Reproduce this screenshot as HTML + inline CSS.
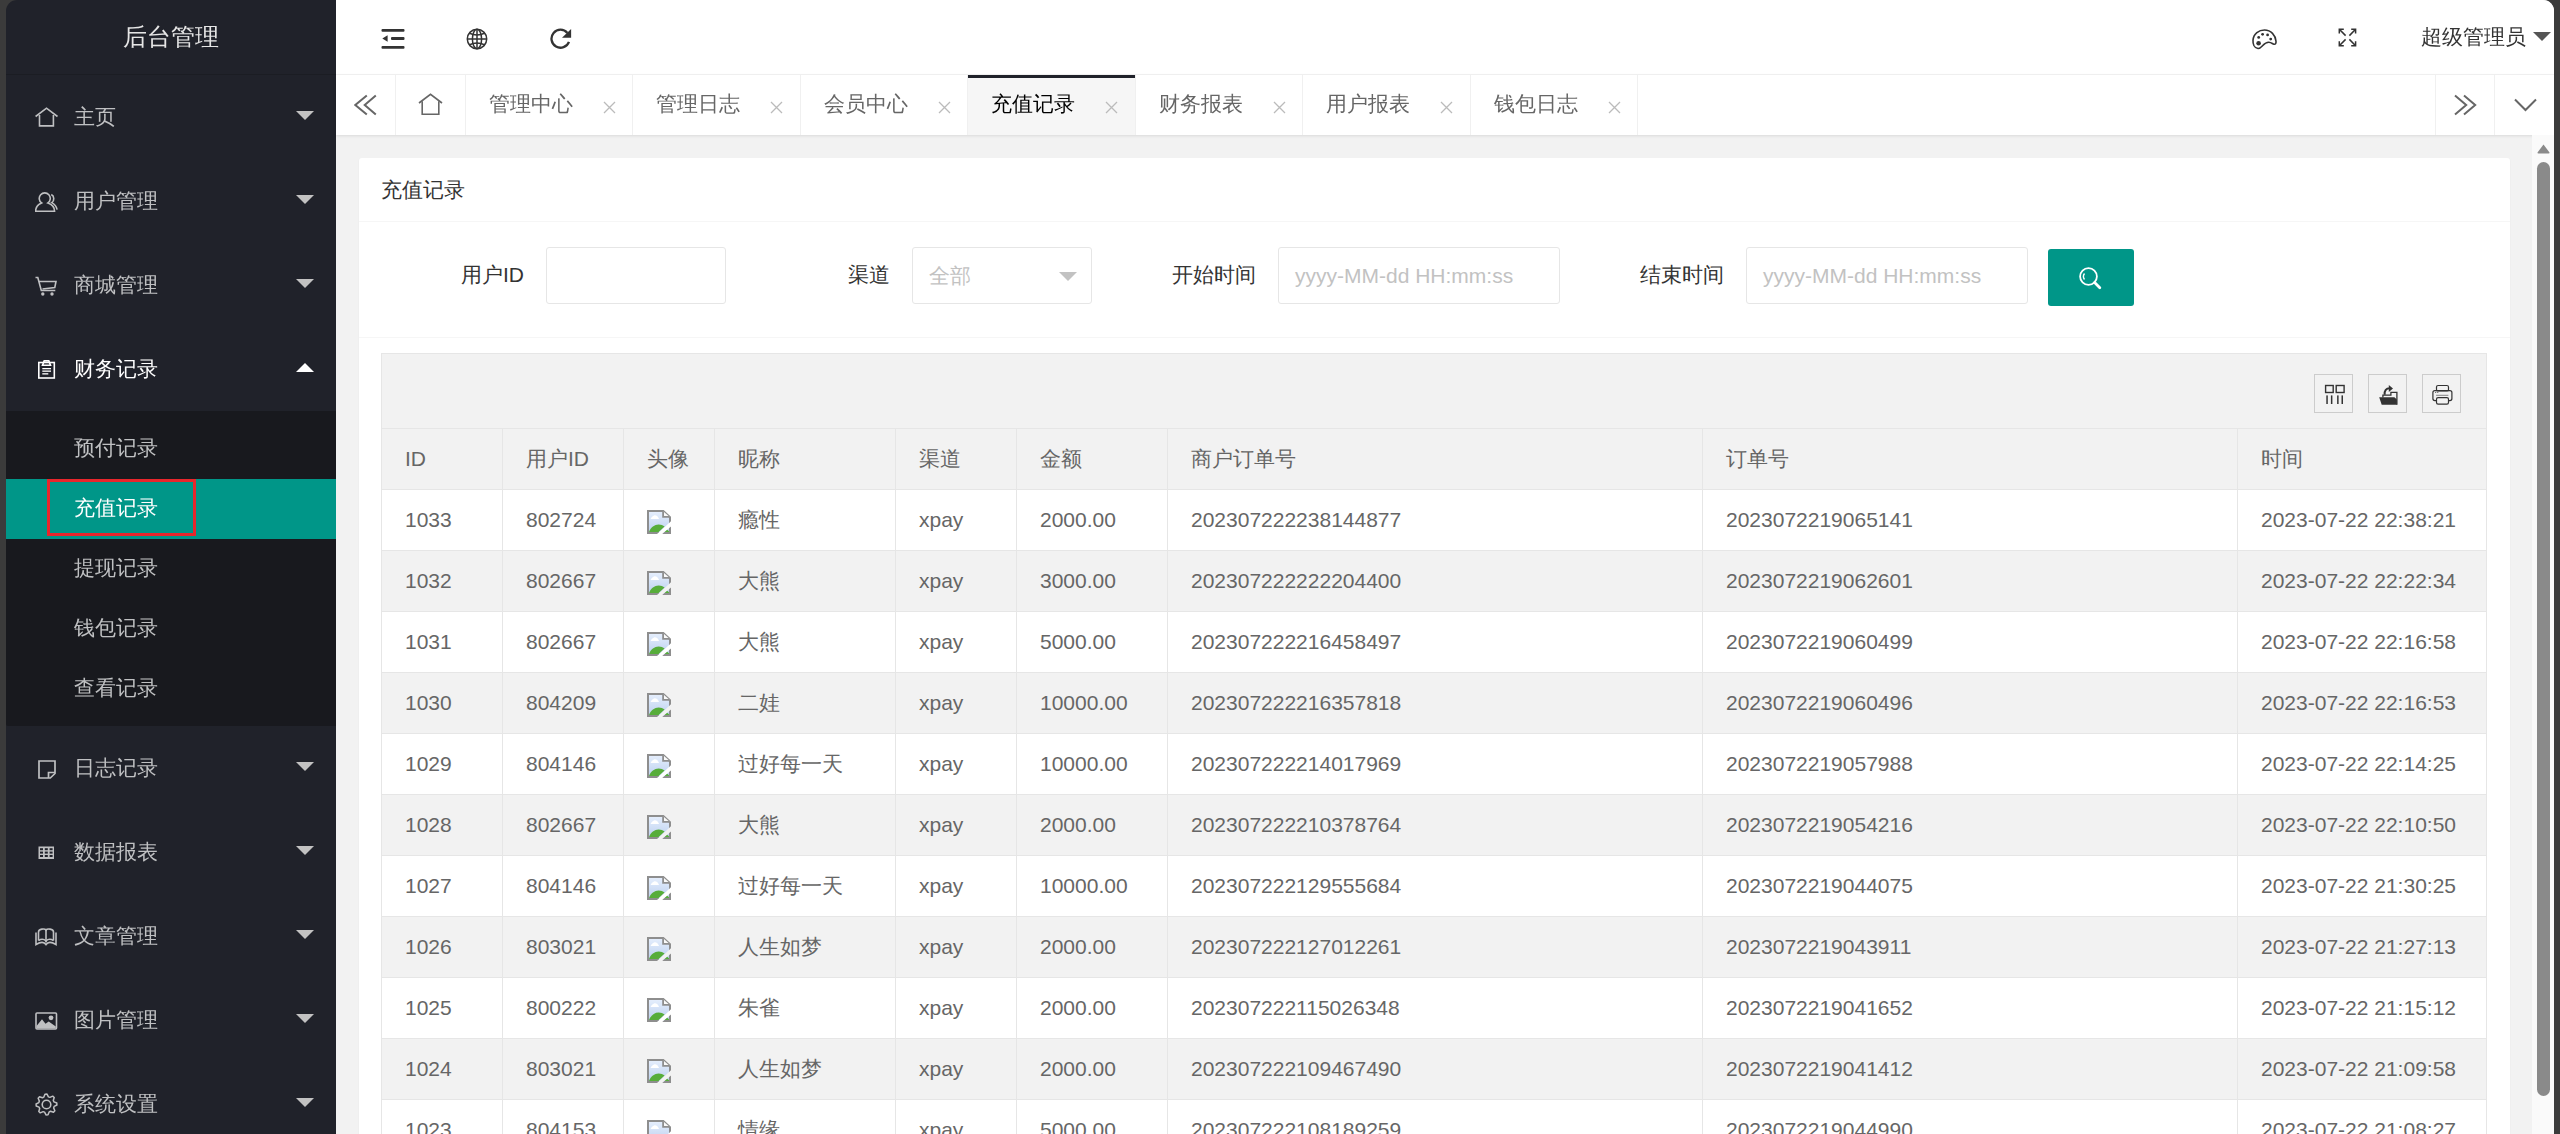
<!DOCTYPE html>
<html><head><meta charset="utf-8"><style>
*{box-sizing:border-box;margin:0;padding:0}
html,body{width:2560px;height:1134px;overflow:hidden;background:#3b3b3b;font-family:"Liberation Sans",sans-serif}
#app{position:absolute;left:6px;top:0;width:2548px;height:1134px;overflow:hidden;border-radius:11px 11px 0 0}
#side{position:absolute;left:0;top:0;width:330px;height:1134px;background:#20222a;will-change:transform}
#logo{position:absolute;left:0;top:0;width:330px;height:75px;line-height:74px;text-align:center;color:#e6e6e6;font-size:24px;border-bottom:1px solid #1b1d23}
.ni{position:absolute;left:0;width:330px;height:84px;color:#bfc0c2;font-size:21px;line-height:84px}
.ni .t{position:absolute;left:68px;top:0}
.ni svg{position:absolute}
.ni .ar{position:absolute;left:290px;width:0;height:0;border-left:9px solid transparent;border-right:9px solid transparent;border-top:9px solid #c2c2c2;top:36px}
.ni.open{color:#fff}
.ni.open .ar{border-top:0;border-bottom:9px solid #fff;top:36px}
#sub{position:absolute;left:0;top:411px;width:330px;height:315px;background:#18191e;border-radius:0 0 0 2px}
.si{position:absolute;left:0;width:330px;height:60px;line-height:60px;color:#bfc0c2;font-size:21px}
.si .t{position:absolute;left:68px;top:-1px}
.si.act{background:#009688;color:#fff}
#redbox{position:absolute;left:41px;top:479px;width:149px;height:57px;border:3px solid #e8262c}
#main{position:absolute;left:330px;top:0;width:2218px;height:1134px;background:#f2f2f2}
#hdr{position:absolute;left:0;top:0;width:2218px;height:75px;background:#fff;border-bottom:1px solid #f3f3f3;will-change:transform}
#hdr svg{position:absolute}
#uname{position:absolute;left:2085px;top:0;line-height:74px;font-size:21px;color:#333}
#uarr{position:absolute;left:2197px;top:32px;width:0;height:0;border-left:9px solid transparent;border-right:9px solid transparent;border-top:9px solid #555}
#tabs{position:absolute;left:0;top:75px;width:2218px;height:60px;background:#fff;box-shadow:0 1px 3px rgba(0,0,0,.10);will-change:transform}
#tabs svg{position:absolute}
.tb{position:absolute;top:0;height:60px;border-right:1px solid #f0f0f0;color:#666;font-size:21px;line-height:58px}
.tb .t{position:absolute;left:23px;top:0}
.tb svg{position:absolute;left:137px;top:26px}
.tb.act{background:#f6f6f6;color:#000}
.tb.act::before{content:"";position:absolute;left:0;top:0;right:0;height:3px;background:#20222a}
#card{position:absolute;left:23px;top:158px;width:2151px;height:1000px;background:#fff;border-radius:3px;box-shadow:0 1px 2px rgba(0,0,0,.05)}
.ch{position:absolute;left:0;top:0;width:2151px;height:64px;border-bottom:1px solid #f6f6f6;color:#333;font-size:21px;line-height:63px;padding-left:22px}
.fa{position:absolute;left:0;top:64px;width:2151px;height:116px;border-bottom:1px solid #f6f6f6}
.lbl{position:absolute;color:#333;font-size:21px;line-height:56px;top:25px;white-space:nowrap}
.inp{position:absolute;top:25px;height:57px;border:1px solid #e6e6e6;border-radius:3px;background:#fff;color:#c2c2c2;font-size:21px;line-height:55px;padding-left:16px;white-space:nowrap}
#sbtn{position:absolute;left:1689px;top:27px;width:86px;height:57px;background:#009688;border-radius:3px}
#scr{position:absolute;left:2196px;top:135px;width:22px;height:999px;background:#fafafa}
#thumb{position:absolute;left:5px;top:27px;width:13px;height:934px;background:#8a8a8a;border-radius:7px}
#tool{position:absolute;left:22px;top:195px;width:2106px;height:75px;background:#f2f2f2;border:1px solid #e6e6e6;border-bottom:0}
.tbtn{position:absolute;top:20px;width:39px;height:39px;border:1px solid #ccc}
.tbtn svg{position:absolute;left:0;top:0}
table{border-collapse:collapse;position:absolute;left:22px;top:270px;table-layout:fixed;width:2105px}
td{border:1px solid #e6e6e6;height:61px;font-size:21px;color:#666;padding:0 0 0 23px;white-space:nowrap;overflow:hidden;background:#fff}
tr.h td{height:61px;background:#f2f2f2}
tr.e td{background:#f2f2f2}
td svg{vertical-align:middle;position:relative;top:1px}
</style></head><body>
<div id="app">
<div id="side">
<div id="logo">后台管理</div>
<div class="ni" style="top:75px"><span class="t">主页</span><span class="ar"></span></div>
<svg style="position:absolute;left:29px;top:107px" width="23" height="20" viewBox="0 0 23 20"><g fill="none" stroke="#bfc0c2" stroke-width="1.6" stroke-linejoin="miter"><path d="M0.6 9.5 L11.5 1.2 L22.5 9.5"/><path d="M4.5 8 V18.9 H18.4 V8"/></g></svg>
<div class="ni" style="top:159px"><span class="t">用户管理</span><span class="ar"></span></div>
<svg style="position:absolute;left:29px;top:191px" width="23" height="21" viewBox="0 0 23 21"><g fill="none" stroke="#bfc0c2" stroke-width="1.6"><path d="M6.6 11.9 A5.5 5.5 0 1 1 12.9 11.9 C17.5 13.5 19.6 17 19.6 20.4 H0.6 C0.6 17 2.5 13.5 6.6 11.9 Z"/><path d="M16.3 3.5 C19.5 5 19.5 10 16.8 11.6 C19.8 13.2 21.5 15.5 22.1 18.6"/></g></svg>
<div class="ni" style="top:243px"><span class="t">商城管理</span><span class="ar"></span></div>
<svg style="position:absolute;left:29px;top:276px" width="22" height="20" viewBox="0 0 22 20"><g fill="none" stroke="#bfc0c2" stroke-width="1.6"><path d="M0.5 1.5 H2.8 L6.3 14.5 H20.3"/><path d="M4 5.5 H21 L19.8 11.5 L7.5 13"/></g><circle cx="7.8" cy="18" r="1.7" fill="#bfc0c2"/><circle cx="17" cy="18" r="1.7" fill="#bfc0c2"/></svg>
<div class="ni open" style="top:327px"><span class="t">财务记录</span><span class="ar"></span></div>
<svg style="position:absolute;left:32px;top:360px" width="18" height="19" viewBox="0 0 18 19"><g fill="none" stroke="#ffffff" stroke-width="1.6"><rect x="0.8" y="2.5" width="15.5" height="15.5"/><path d="M4.5 5.3 H12.5 L10.8 0.9 H6.2 Z"/></g><g fill="#ffffff"><rect x="4.3" y="8" width="8.7" height="1.3"/><rect x="4.3" y="10.5" width="8.7" height="1.3"/><rect x="4.3" y="13.2" width="6" height="1.3"/></g></svg>
<div class="ni" style="top:726px"><span class="t">日志记录</span><span class="ar"></span></div>
<svg style="position:absolute;left:32px;top:760px" width="18" height="19" viewBox="0 0 18 19"><g fill="none" stroke="#bfc0c2" stroke-width="1.7"><path d="M1 1 H17 V13.5 L12.3 18 H1 Z"/><path d="M10.5 18 V12.5 H17"/></g></svg>
<div class="ni" style="top:810px"><span class="t">数据报表</span><span class="ar"></span></div>
<svg style="position:absolute;left:32px;top:846px" width="17" height="14" viewBox="0 0 17 14"><rect x="0.5" y="0.5" width="15.5" height="12.5" fill="#bfc0c2"/><g fill="#20222a"><rect x="2" y="2.2" width="3" height="2"/><rect x="6.8" y="2.2" width="3" height="2"/><rect x="11.6" y="2.2" width="3" height="2"/><rect x="2" y="5.6" width="3" height="2"/><rect x="6.8" y="5.6" width="3" height="2"/><rect x="11.6" y="5.6" width="3" height="2"/><rect x="2" y="9" width="3" height="2"/><rect x="6.8" y="9" width="3" height="2"/><rect x="11.6" y="9" width="3" height="2"/></g></svg>
<div class="ni" style="top:894px"><span class="t">文章管理</span><span class="ar"></span></div>
<svg style="position:absolute;left:29px;top:927px" width="23" height="19" viewBox="0 0 23 19"><g fill="none" stroke="#bfc0c2" stroke-width="1.6"><path d="M1 5.5 V17.5 C6 14.5 9 14.5 11 17.5 C13 14.5 16 14.5 21 17.5 V5.5"/><path d="M3.5 13.5 V5 C3.5 1.5 10 1.5 11 3 C12 1.5 18.5 1.5 18.5 5 V13.5"/><path d="M11 3 V15.5"/><path d="M3.5 13.5 C6 12 9 12 11 14 C13 12 16 12 18.5 13.5"/></g></svg>
<div class="ni" style="top:978px"><span class="t">图片管理</span><span class="ar"></span></div>
<svg style="position:absolute;left:29px;top:1012px" width="23" height="18" viewBox="0 0 23 18"><rect x="1" y="1" width="20.5" height="16" rx="1" fill="none" stroke="#bfc0c2" stroke-width="1.6"/><path d="M1.5 14 L7 7.3 L10.5 11.8 L13.7 9.5 L20.8 14.5 V16.5 H1.5 Z" fill="#bfc0c2"/><circle cx="16" cy="5.8" r="2.4" fill="#bfc0c2"/></svg>
<div class="ni" style="top:1062px"><span class="t">系统设置</span><span class="ar"></span></div>
<svg style="position:absolute;left:29px;top:1093px" width="23" height="23" viewBox="0 0 23 23"><polygon points="9.97,1.21 12.01,1.11 13.42,3.84 14.88,4.36 17.70,3.15 19.21,4.52 18.28,7.44 18.94,8.84 21.79,9.97 21.89,12.01 19.16,13.42 18.64,14.88 19.85,17.70 18.48,19.21 15.56,18.28 14.16,18.94 13.03,21.79 10.99,21.89 9.58,19.16 8.12,18.64 5.30,19.85 3.79,18.48 4.72,15.56 4.06,14.16 1.21,13.03 1.11,10.99 3.84,9.58 4.36,8.12 3.15,5.30 4.52,3.79 7.44,4.72 8.84,4.06" fill="none" stroke="#bfc0c2" stroke-width="1.5" stroke-linejoin="round"/><circle cx="11.5" cy="11.5" r="4.3" fill="none" stroke="#bfc0c2" stroke-width="1.6"/></svg>
<div id="sub">
<div class="si" style="top:7.5px"><span class="t">预付记录</span></div>
<div class="si act" style="top:67.5px"><span class="t">充值记录</span></div>
<div class="si" style="top:127.5px"><span class="t">提现记录</span></div>
<div class="si" style="top:187.5px"><span class="t">钱包记录</span></div>
<div class="si" style="top:247.5px"><span class="t">查看记录</span></div>
</div>
<div id="redbox"></div>
</div>
<div id="main">
<svg width="0" height="0" style="position:absolute"><defs><linearGradient id="bgr" x1="0" y1="0" x2="0" y2="1"><stop offset="0" stop-color="#e6effd"/><stop offset="1" stop-color="#bcd0ef"/></linearGradient><clipPath id="bcut"><path d="M0 0 H24 V11.2 L10 24 H0 Z M24 16.5 V24 H15.2 Z"/></clipPath></defs></svg>
<div id="hdr"><svg style="left:45px;top:28px" width="24" height="22" viewBox="0 0 24 22"><g fill="#333"><rect x="0.5" y="1" width="23" height="2.8" rx="1"/><rect x="10" y="9.1" width="13.5" height="2.8" rx="1"/><rect x="0.5" y="18" width="23" height="2.8" rx="1"/><path d="M1.3 10.5 L6.6 7.3 V13.7 Z"/></g></svg><svg style="left:130px;top:28px" width="22" height="22" viewBox="0 0 22 22"><g fill="none" stroke="#333" stroke-width="1.5"><circle cx="11" cy="11" r="9.7"/><ellipse cx="11" cy="11" rx="4.6" ry="9.7"/><path d="M11 1.3 V20.7 M1.3 11 H20.7"/><path d="M3 5 Q11 9 19 5 M3 17 Q11 13 19 17"/></g></svg><svg style="left:214px;top:28px" width="22" height="22" viewBox="0 0 22 22"><path d="M18.96 13.78 A9 9 0 1 1 17.39 4.91" fill="none" stroke="#333" stroke-width="2.3"/><path d="M21.1 0.9 V9.7 H12 Z" fill="#333"/></svg><svg style="left:1915px;top:28px" width="27" height="23" viewBox="0 0 27 23"><path transform="translate(1 0.7)" d="M6 19.8 C2 19.3 0.8 15 1 11.5 C1.5 5 7 1.3 12.5 1.3 C19 1.3 23.5 6.5 24 12.5 C24.2 14.5 23.5 15.8 22 15.6 C20.5 15.3 19.5 13.8 16.8 13.6 C14 13.5 12 15.5 10.5 17 C9 18.6 7.8 20 6 19.8 Z" fill="none" stroke="#333" stroke-width="1.6"/><g fill="#333"><circle cx="7.6" cy="15.3" r="2.3"/><circle cx="7.7" cy="9.4" r="1.4"/><circle cx="11.6" cy="6.3" r="1.4"/><circle cx="16.6" cy="6.9" r="1.4"/><circle cx="19.7" cy="11.1" r="1.4"/></g></svg><svg style="left:2002px;top:28px" width="20" height="20" viewBox="0 0 20 20"><g fill="none" stroke="#333" stroke-width="1.5"><path d="M1.3 5.5 V1.3 H5.8 M1.3 1.3 L7.6 7.6"/><path d="M13.2 1.3 H17.6 V5.5 M17.6 1.3 L11.4 7.6"/><path d="M1.3 13.3 V17.7 H5.8 M1.3 17.7 L7.6 11.4"/><path d="M13.2 17.7 H17.6 V13.3 M17.6 17.7 L11.4 11.4"/></g></svg><span id="uname">超级管理员</span><span id="uarr"></span></div>
<div id="tabs"><div class="tb" style="left:0;width:60px"></div><svg style="left:18px;top:19px" width="24" height="22" viewBox="0 0 24 22"><g fill="none" stroke="#666" stroke-width="2"><path d="M12.8 1.5 L1.3 11 L12.8 20.6"/><path d="M21.8 1.5 L10.7 11 L21.8 20.6"/></g></svg><div class="tb" style="left:60px;width:70px"></div><svg style="left:82px;top:18px" width="26" height="23" viewBox="0 0 26 23"><g fill="none" stroke="#666" stroke-width="1.6"><path d="M1 10 L12.5 1.3 L24 10"/><path d="M4.2 8.3 V21.3 H20.8 V8.3"/></g></svg><div class="tb" style="left:129.5px;width:167.5px"><span class="t">管理中心</span><svg width="13" height="13" viewBox="0 0 13 13"><path d="M1 1 L12 12 M12 1 L1 12" stroke="#bbb" stroke-width="1.3"/></svg></div><div class="tb" style="left:297.0px;width:167.5px"><span class="t">管理日志</span><svg width="13" height="13" viewBox="0 0 13 13"><path d="M1 1 L12 12 M12 1 L1 12" stroke="#bbb" stroke-width="1.3"/></svg></div><div class="tb" style="left:464.5px;width:167.5px"><span class="t">会员中心</span><svg width="13" height="13" viewBox="0 0 13 13"><path d="M1 1 L12 12 M12 1 L1 12" stroke="#bbb" stroke-width="1.3"/></svg></div><div class="tb act" style="left:632.0px;width:167.5px"><span class="t">充值记录</span><svg width="13" height="13" viewBox="0 0 13 13"><path d="M1 1 L12 12 M12 1 L1 12" stroke="#bbb" stroke-width="1.3"/></svg></div><div class="tb" style="left:799.5px;width:167.5px"><span class="t">财务报表</span><svg width="13" height="13" viewBox="0 0 13 13"><path d="M1 1 L12 12 M12 1 L1 12" stroke="#bbb" stroke-width="1.3"/></svg></div><div class="tb" style="left:967.0px;width:167.5px"><span class="t">用户报表</span><svg width="13" height="13" viewBox="0 0 13 13"><path d="M1 1 L12 12 M12 1 L1 12" stroke="#bbb" stroke-width="1.3"/></svg></div><div class="tb" style="left:1134.5px;width:167.5px"><span class="t">钱包日志</span><svg width="13" height="13" viewBox="0 0 13 13"><path d="M1 1 L12 12 M12 1 L1 12" stroke="#bbb" stroke-width="1.3"/></svg></div><div class="tb" style="left:2099px;width:60px;border-left:1px solid #f0f0f0;border-right:1px solid #f0f0f0"></div><svg style="left:2117px;top:19px" width="24" height="22" viewBox="0 0 24 22"><g fill="none" stroke="#666" stroke-width="2"><path d="M2 1.5 L13.2 11 L2 20.6"/><path d="M11 1.5 L22.2 11 L11 20.6"/></g></svg><svg style="left:2178px;top:23px" width="24" height="14" viewBox="0 0 24 14"><path d="M1 1.5 L11.5 12 L22 1.5" fill="none" stroke="#666" stroke-width="2"/></svg></div>
<div id="scr"><svg style="position:absolute;left:5px;top:9px" width="13" height="10" viewBox="0 0 13 10"><path d="M6.5 0.5 L12.5 8.5 Q12.8 9.5 11.5 9.5 H1.5 Q0.2 9.5 0.5 8.5 Z" fill="#8a8a8a"/></svg><div id="thumb"></div></div>
<div id="card"><div class="ch">充值记录</div><div class="fa"><span class="lbl" style="right:1986px">用户ID</span><div class="inp" style="left:187px;width:180px"></div><span class="lbl" style="right:1620px">渠道</span><div class="inp" style="left:553px;width:180px">全部<span style="position:absolute;left:146px;top:24px;width:0;height:0;border-left:9px solid transparent;border-right:9px solid transparent;border-top:9px solid #c2c2c2"></span></div><span class="lbl" style="right:1254px">开始时间</span><div class="inp" style="left:919px;width:282px">yyyy-MM-dd HH:mm:ss</div><span class="lbl" style="right:786px">结束时间</span><div class="inp" style="left:1387px;width:282px">yyyy-MM-dd HH:mm:ss</div><div id="sbtn"><svg style="position:absolute;left:30px;top:17px" width="26" height="26" viewBox="0 0 26 26"><circle cx="10.5" cy="10.5" r="8.4" fill="none" stroke="#fff" stroke-width="1.8"/><path d="M16.6 16.6 L21.8 21.8" stroke="#fff" stroke-width="2.8" stroke-linecap="round"/><path d="M6.5 7.5 A5 5 0 0 0 6.5 13.5" fill="none" stroke="#fff" stroke-width="1.4"/></svg></div></div><div id="tool"><div class="tbtn" style="left:1932px"><svg width="39" height="39" viewBox="0 0 39 39"><g transform="translate(-0.7 -1)"><g fill="none" stroke="#333" stroke-width="1.4"><rect x="11.3" y="11.5" width="7.6" height="7"/><rect x="21.9" y="11.5" width="7.9" height="7"/></g><g fill="#333"><rect x="12" y="21.4" width="1.5" height="8.6"/><rect x="16.6" y="21.4" width="1.5" height="8.6"/><rect x="22.8" y="21.4" width="1.5" height="8.6"/><rect x="27.2" y="21.4" width="1.5" height="8.6"/></g></g></svg></div><div class="tbtn" style="left:1986px"><svg width="39" height="39" viewBox="0 0 39 39"><g transform="translate(-0.7 -1)"><path d="M10.9 23.3 H26.1 L28.6 25.4 V30.7 H13.4 Z" fill="#333"/><path d="M14.6 23.5 V21.2 H22.6 V18.3 H28.6 V30.7" fill="none" stroke="#333" stroke-width="1.3"/><path d="M16.3 20.8 C16.1 16.5 17.8 14.3 21.5 14.3" fill="none" stroke="#333" stroke-width="2"/><path d="M20.5 10.9 L24.7 14.4 L20.5 18 Z" fill="#333"/></g></svg></div><div class="tbtn" style="left:2040px"><svg width="39" height="39" viewBox="0 0 39 39"><g transform="translate(-0.7 -1)"><g fill="none" stroke="#333" stroke-width="1.2"><rect x="14.2" y="11.5" width="12" height="5.5" rx="1.6"/><rect x="10.6" y="16.6" width="19" height="10" rx="2"/></g><rect x="14.2" y="23.7" width="12" height="6.4" rx="1.6" fill="#f2f2f2" stroke="#333" stroke-width="1.2"/><path d="M13.8 21.3 H26.1" stroke="#777" stroke-width="0.9"/><circle cx="13.4" cy="18.4" r="0.55" fill="#555"/><circle cx="15.5" cy="18.4" r="0.55" fill="#555"/></g></svg></div></div><table><colgroup><col style="width:121px"><col style="width:121px"><col style="width:91px"><col style="width:181px"><col style="width:121px"><col style="width:151px"><col style="width:535px"><col style="width:535px"><col style="width:249px"></colgroup><tr class="h"><td>ID</td><td>用户ID</td><td>头像</td><td>昵称</td><td>渠道</td><td>金额</td><td>商户订单号</td><td>订单号</td><td>时间</td></tr><tr><td>1033</td><td>802724</td><td><svg width="24" height="24" viewBox="0 0 24 24"><g clip-path="url(#bcut)"><path d="M1 1 H16.3 L23 7.3 V23 H1 Z" fill="url(#bgr)" stroke="#8e8e8e" stroke-width="2"/><path d="M16.1 1.2 V6.9 H22.8" fill="#fafafa" stroke="#8e8e8e" stroke-width="1.8"/><path d="M3.6 9 C4.3 7.3 5.6 6 7.4 5.3 C9.3 5 11.3 6.3 12 9 Z" fill="#fff"/><path d="M2 22 C3.8 17.5 7.5 14.6 11.6 14.6 C14 14.6 16 15.5 17.6 16.6 L11.6 22 Z" fill="#57ad3a"/><path d="M16 22 L19.7 19.3 L22 21.3 V22 Z" fill="#57ad3a"/></g></svg></td><td>瘾性</td><td>xpay</td><td>2000.00</td><td>202307222238144877</td><td>2023072219065141</td><td>2023-07-22 22:38:21</td></tr><tr class="e"><td>1032</td><td>802667</td><td><svg width="24" height="24" viewBox="0 0 24 24"><g clip-path="url(#bcut)"><path d="M1 1 H16.3 L23 7.3 V23 H1 Z" fill="url(#bgr)" stroke="#8e8e8e" stroke-width="2"/><path d="M16.1 1.2 V6.9 H22.8" fill="#fafafa" stroke="#8e8e8e" stroke-width="1.8"/><path d="M3.6 9 C4.3 7.3 5.6 6 7.4 5.3 C9.3 5 11.3 6.3 12 9 Z" fill="#fff"/><path d="M2 22 C3.8 17.5 7.5 14.6 11.6 14.6 C14 14.6 16 15.5 17.6 16.6 L11.6 22 Z" fill="#57ad3a"/><path d="M16 22 L19.7 19.3 L22 21.3 V22 Z" fill="#57ad3a"/></g></svg></td><td>大熊</td><td>xpay</td><td>3000.00</td><td>202307222222204400</td><td>2023072219062601</td><td>2023-07-22 22:22:34</td></tr><tr><td>1031</td><td>802667</td><td><svg width="24" height="24" viewBox="0 0 24 24"><g clip-path="url(#bcut)"><path d="M1 1 H16.3 L23 7.3 V23 H1 Z" fill="url(#bgr)" stroke="#8e8e8e" stroke-width="2"/><path d="M16.1 1.2 V6.9 H22.8" fill="#fafafa" stroke="#8e8e8e" stroke-width="1.8"/><path d="M3.6 9 C4.3 7.3 5.6 6 7.4 5.3 C9.3 5 11.3 6.3 12 9 Z" fill="#fff"/><path d="M2 22 C3.8 17.5 7.5 14.6 11.6 14.6 C14 14.6 16 15.5 17.6 16.6 L11.6 22 Z" fill="#57ad3a"/><path d="M16 22 L19.7 19.3 L22 21.3 V22 Z" fill="#57ad3a"/></g></svg></td><td>大熊</td><td>xpay</td><td>5000.00</td><td>202307222216458497</td><td>2023072219060499</td><td>2023-07-22 22:16:58</td></tr><tr class="e"><td>1030</td><td>804209</td><td><svg width="24" height="24" viewBox="0 0 24 24"><g clip-path="url(#bcut)"><path d="M1 1 H16.3 L23 7.3 V23 H1 Z" fill="url(#bgr)" stroke="#8e8e8e" stroke-width="2"/><path d="M16.1 1.2 V6.9 H22.8" fill="#fafafa" stroke="#8e8e8e" stroke-width="1.8"/><path d="M3.6 9 C4.3 7.3 5.6 6 7.4 5.3 C9.3 5 11.3 6.3 12 9 Z" fill="#fff"/><path d="M2 22 C3.8 17.5 7.5 14.6 11.6 14.6 C14 14.6 16 15.5 17.6 16.6 L11.6 22 Z" fill="#57ad3a"/><path d="M16 22 L19.7 19.3 L22 21.3 V22 Z" fill="#57ad3a"/></g></svg></td><td>二娃</td><td>xpay</td><td>10000.00</td><td>202307222216357818</td><td>2023072219060496</td><td>2023-07-22 22:16:53</td></tr><tr><td>1029</td><td>804146</td><td><svg width="24" height="24" viewBox="0 0 24 24"><g clip-path="url(#bcut)"><path d="M1 1 H16.3 L23 7.3 V23 H1 Z" fill="url(#bgr)" stroke="#8e8e8e" stroke-width="2"/><path d="M16.1 1.2 V6.9 H22.8" fill="#fafafa" stroke="#8e8e8e" stroke-width="1.8"/><path d="M3.6 9 C4.3 7.3 5.6 6 7.4 5.3 C9.3 5 11.3 6.3 12 9 Z" fill="#fff"/><path d="M2 22 C3.8 17.5 7.5 14.6 11.6 14.6 C14 14.6 16 15.5 17.6 16.6 L11.6 22 Z" fill="#57ad3a"/><path d="M16 22 L19.7 19.3 L22 21.3 V22 Z" fill="#57ad3a"/></g></svg></td><td>过好每一天</td><td>xpay</td><td>10000.00</td><td>202307222214017969</td><td>2023072219057988</td><td>2023-07-22 22:14:25</td></tr><tr class="e"><td>1028</td><td>802667</td><td><svg width="24" height="24" viewBox="0 0 24 24"><g clip-path="url(#bcut)"><path d="M1 1 H16.3 L23 7.3 V23 H1 Z" fill="url(#bgr)" stroke="#8e8e8e" stroke-width="2"/><path d="M16.1 1.2 V6.9 H22.8" fill="#fafafa" stroke="#8e8e8e" stroke-width="1.8"/><path d="M3.6 9 C4.3 7.3 5.6 6 7.4 5.3 C9.3 5 11.3 6.3 12 9 Z" fill="#fff"/><path d="M2 22 C3.8 17.5 7.5 14.6 11.6 14.6 C14 14.6 16 15.5 17.6 16.6 L11.6 22 Z" fill="#57ad3a"/><path d="M16 22 L19.7 19.3 L22 21.3 V22 Z" fill="#57ad3a"/></g></svg></td><td>大熊</td><td>xpay</td><td>2000.00</td><td>202307222210378764</td><td>2023072219054216</td><td>2023-07-22 22:10:50</td></tr><tr><td>1027</td><td>804146</td><td><svg width="24" height="24" viewBox="0 0 24 24"><g clip-path="url(#bcut)"><path d="M1 1 H16.3 L23 7.3 V23 H1 Z" fill="url(#bgr)" stroke="#8e8e8e" stroke-width="2"/><path d="M16.1 1.2 V6.9 H22.8" fill="#fafafa" stroke="#8e8e8e" stroke-width="1.8"/><path d="M3.6 9 C4.3 7.3 5.6 6 7.4 5.3 C9.3 5 11.3 6.3 12 9 Z" fill="#fff"/><path d="M2 22 C3.8 17.5 7.5 14.6 11.6 14.6 C14 14.6 16 15.5 17.6 16.6 L11.6 22 Z" fill="#57ad3a"/><path d="M16 22 L19.7 19.3 L22 21.3 V22 Z" fill="#57ad3a"/></g></svg></td><td>过好每一天</td><td>xpay</td><td>10000.00</td><td>202307222129555684</td><td>2023072219044075</td><td>2023-07-22 21:30:25</td></tr><tr class="e"><td>1026</td><td>803021</td><td><svg width="24" height="24" viewBox="0 0 24 24"><g clip-path="url(#bcut)"><path d="M1 1 H16.3 L23 7.3 V23 H1 Z" fill="url(#bgr)" stroke="#8e8e8e" stroke-width="2"/><path d="M16.1 1.2 V6.9 H22.8" fill="#fafafa" stroke="#8e8e8e" stroke-width="1.8"/><path d="M3.6 9 C4.3 7.3 5.6 6 7.4 5.3 C9.3 5 11.3 6.3 12 9 Z" fill="#fff"/><path d="M2 22 C3.8 17.5 7.5 14.6 11.6 14.6 C14 14.6 16 15.5 17.6 16.6 L11.6 22 Z" fill="#57ad3a"/><path d="M16 22 L19.7 19.3 L22 21.3 V22 Z" fill="#57ad3a"/></g></svg></td><td>人生如梦</td><td>xpay</td><td>2000.00</td><td>202307222127012261</td><td>2023072219043911</td><td>2023-07-22 21:27:13</td></tr><tr><td>1025</td><td>800222</td><td><svg width="24" height="24" viewBox="0 0 24 24"><g clip-path="url(#bcut)"><path d="M1 1 H16.3 L23 7.3 V23 H1 Z" fill="url(#bgr)" stroke="#8e8e8e" stroke-width="2"/><path d="M16.1 1.2 V6.9 H22.8" fill="#fafafa" stroke="#8e8e8e" stroke-width="1.8"/><path d="M3.6 9 C4.3 7.3 5.6 6 7.4 5.3 C9.3 5 11.3 6.3 12 9 Z" fill="#fff"/><path d="M2 22 C3.8 17.5 7.5 14.6 11.6 14.6 C14 14.6 16 15.5 17.6 16.6 L11.6 22 Z" fill="#57ad3a"/><path d="M16 22 L19.7 19.3 L22 21.3 V22 Z" fill="#57ad3a"/></g></svg></td><td>朱雀</td><td>xpay</td><td>2000.00</td><td>202307222115026348</td><td>2023072219041652</td><td>2023-07-22 21:15:12</td></tr><tr class="e"><td>1024</td><td>803021</td><td><svg width="24" height="24" viewBox="0 0 24 24"><g clip-path="url(#bcut)"><path d="M1 1 H16.3 L23 7.3 V23 H1 Z" fill="url(#bgr)" stroke="#8e8e8e" stroke-width="2"/><path d="M16.1 1.2 V6.9 H22.8" fill="#fafafa" stroke="#8e8e8e" stroke-width="1.8"/><path d="M3.6 9 C4.3 7.3 5.6 6 7.4 5.3 C9.3 5 11.3 6.3 12 9 Z" fill="#fff"/><path d="M2 22 C3.8 17.5 7.5 14.6 11.6 14.6 C14 14.6 16 15.5 17.6 16.6 L11.6 22 Z" fill="#57ad3a"/><path d="M16 22 L19.7 19.3 L22 21.3 V22 Z" fill="#57ad3a"/></g></svg></td><td>人生如梦</td><td>xpay</td><td>2000.00</td><td>202307222109467490</td><td>2023072219041412</td><td>2023-07-22 21:09:58</td></tr><tr><td>1023</td><td>804153</td><td><svg width="24" height="24" viewBox="0 0 24 24"><g clip-path="url(#bcut)"><path d="M1 1 H16.3 L23 7.3 V23 H1 Z" fill="url(#bgr)" stroke="#8e8e8e" stroke-width="2"/><path d="M16.1 1.2 V6.9 H22.8" fill="#fafafa" stroke="#8e8e8e" stroke-width="1.8"/><path d="M3.6 9 C4.3 7.3 5.6 6 7.4 5.3 C9.3 5 11.3 6.3 12 9 Z" fill="#fff"/><path d="M2 22 C3.8 17.5 7.5 14.6 11.6 14.6 C14 14.6 16 15.5 17.6 16.6 L11.6 22 Z" fill="#57ad3a"/><path d="M16 22 L19.7 19.3 L22 21.3 V22 Z" fill="#57ad3a"/></g></svg></td><td>情缘</td><td>xpay</td><td>5000.00</td><td>202307222108189259</td><td>2023072219044990</td><td>2023-07-22 21:08:27</td></tr></table></div>
</div>
</div>
</body></html>
